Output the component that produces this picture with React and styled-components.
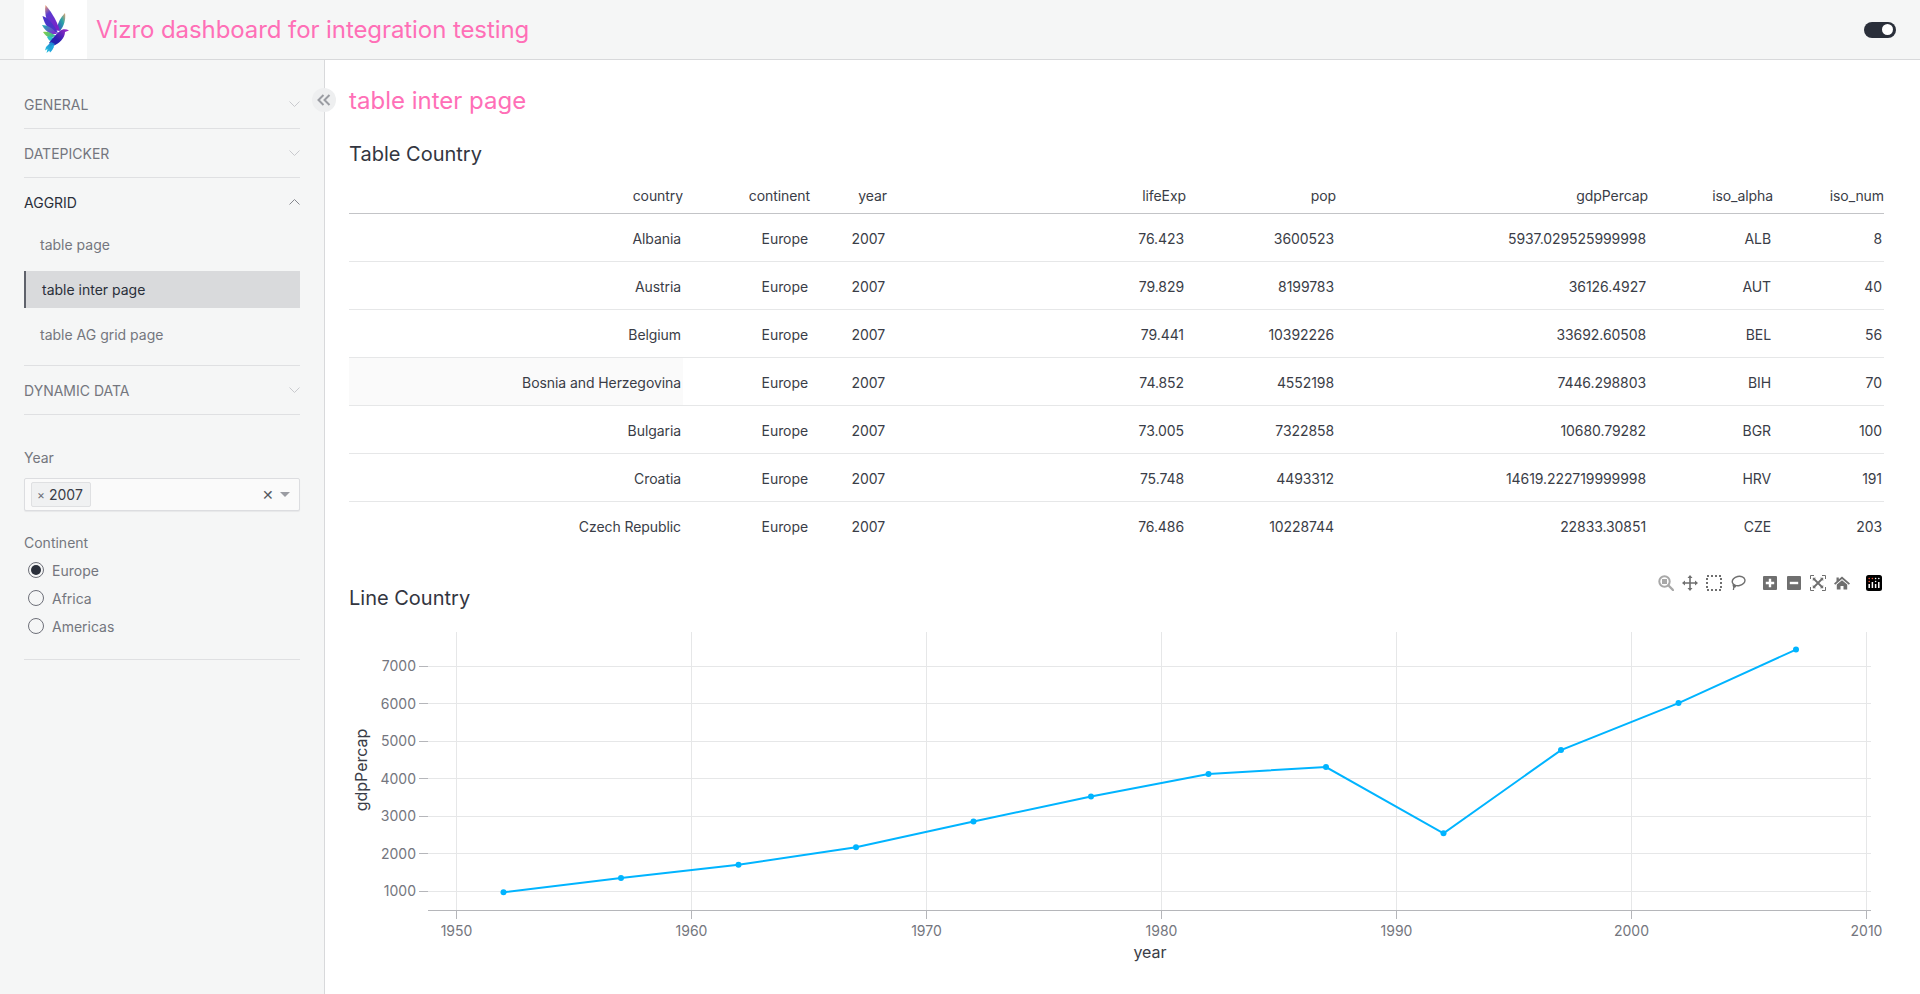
import React from 'react';
import styled, { createGlobalStyle } from 'styled-components';

const GlobalStyle = createGlobalStyle`
  html, body {
    margin: 0;
    padding: 0;
    height: 100%;
    overflow: hidden;
    background: #ffffff;
    font-family: Inter, "Liberation Sans", sans-serif;
    font-weight: 400;
    color: #3a3d47;
  }
  * { box-sizing: border-box; }
`;

const Page = styled.div`
  display: flex;
  flex-direction: column;
  width: 100vw;
  height: 100vh;
`;

const Header = styled.header`
  display: flex;
  align-items: center;
  flex: 0 0 60px;
  height: 60px;
  padding: 0 24px;
  background: #f5f6f6;
  border-bottom: 1px solid #d8d9db;
`;

const LogoBox = styled.div`
  display: flex;
  width: 63px;
  height: 59px;
  background: #ffffff;
`;

const AppTitle = styled.div`
  margin-left: 9px;
  font-size: 24px;
  line-height: 32px;
  letter-spacing: -0.08px;
  color: #ff6fb7;
`;

const ThemeToggle = styled.div`
  display: flex;
  align-items: center;
  justify-content: flex-end;
  width: 32px;
  height: 16px;
  margin-left: auto;
  padding-right: 3px;
  border-radius: 8px;
  background: #2a2f3a;

  &::after {
    content: '';
    width: 11px;
    height: 11px;
    border-radius: 50%;
    background: #ffffff;
  }
`;

const Body = styled.div`
  display: flex;
  flex: 1;
  min-height: 0;
`;

const Sidebar = styled.aside`
  position: relative;
  flex: 0 0 325px;
  padding: 20px 24px 0;
  background: #f5f6f6;
  border-right: 1px solid #d8d9db;
`;

const CollapseButton = styled.div`
  position: absolute;
  top: 28px;
  right: -12px;
  display: flex;
  align-items: center;
  justify-content: center;
  width: 24px;
  height: 24px;
  border-radius: 50%;
  background: #eeeff0;
`;

const AccordionItem = styled.div`
  border-bottom: 1px solid #dfe0e2;
`;

const AccordionHead = styled.div`
  display: flex;
  align-items: center;
  justify-content: space-between;
  height: 48px;
  font-size: 14px;
  color: ${(p) => (p.$open ? '#2a2f3a' : '#74767e')};
`;

const SubList = styled.div`
  display: flex;
  flex-direction: column;
  gap: 8px;
  padding-bottom: 12px;
`;

const SubLink = styled.div`
  display: flex;
  align-items: center;
  height: 37px;
  font-size: 14px;
  padding-left: 16px;
  color: ${(p) => (p.$active ? '#2a2f3a' : '#74767e')};
  background: ${(p) => (p.$active ? '#d9dadc' : 'transparent')};
  border-left: 2px ${(p) => (p.$active ? 'solid #5f626b' : 'none')};
`;

const Controls = styled.div`
  padding: 33px 0 19px;
  border-bottom: 1px solid #dfe0e2;
`;

const ControlLabel = styled.div`
  font-size: 14px;
  line-height: 20px;
  color: #74767e;
`;

const Dropdown = styled.div`
  display: flex;
  align-items: center;
  height: 33px;
  margin: 10px 0 22px;
  padding: 0 9px 0 6px;
  background: #fafafa;
  border: 1px solid #dcdde0;
  border-radius: 2px;
  box-shadow: 0 1px 1px rgba(20, 23, 33, 0.06);
`;

const Chip = styled.div`
  display: flex;
  align-items: center;
  height: 25px;
  width: 60px;
  padding-left: 5px;
  gap: 4px;
  font-size: 14px;
  background: #f0f1f2;
  border: 1px solid #dfe0e2;
  border-radius: 2px;
`;

const ChipClose = styled.span`
  font-size: 12px;
  color: #6e7079;
`;

const ClearIcon = styled.span`
  margin-left: auto;
  font-size: 14px;
  line-height: 1;
  color: #55585f;
`;

const Caret = styled.span`
  margin-left: 6px;
  width: 0;
  height: 0;
  border-left: 5px solid transparent;
  border-right: 5px solid transparent;
  border-top: 5px solid #9a9ca2;
`;

const RadioGroup = styled.div`
  display: flex;
  flex-direction: column;
  margin-top: 3px;
`;

const RadioRow = styled.div`
  display: flex;
  align-items: center;
  gap: 8px;
  height: 28px;
  padding-left: 4px;
  font-size: 14px;
  color: #74767e;
`;

const RadioDot = styled.span`
  display: flex;
  align-items: center;
  justify-content: center;
  width: 16px;
  height: 16px;
  border: 1px solid #6e7079;
  border-radius: 50%;

  &::after {
    content: '';
    width: 10px;
    height: 10px;
    border-radius: 50%;
    background: ${(p) => (p.$checked ? '#2a2f3a' : 'transparent')};
  }
`;

const Main = styled.main`
  flex: 1;
  min-width: 0;
  padding: 0 36px 0 24px;
`;

const PageTitle = styled.h1`
  margin: 25px 0 0;
  font-size: 24px;
  line-height: 32px;
  font-weight: 400;
  color: #ff6fb7;
`;

const SectionTitle = styled.h2`
  margin: ${(p) => p.$margin};
  font-size: 20px;
  line-height: 28px;
  font-weight: 400;
  color: #33363f;
`;

const Table = styled.div`
  margin-top: 6px;
`;

const TableRow = styled.div`
  display: grid;
  grid-template-columns: 334px 127px 77px 299px 150px 312px 125px 111px;
  align-items: center;
  height: ${(p) => (p.$head ? '40px' : '48px')};
  border-bottom: 1px solid ${(p) => (p.$head ? '#c3c4c7' : p.$last ? 'transparent' : '#e6e7e8')};
`;

const HeadCell = styled.div`
  font-size: 14px;
  letter-spacing: -0.08px;
  text-align: right;
  padding-top: 4px;
`;

const Cell = styled.div`
  display: flex;
  align-items: center;
  justify-content: flex-end;
  height: 100%;
  padding: 2px 2px 0 0;
  font-size: 14px;
  letter-spacing: -0.08px;
  background: ${(p) => (p.$hover ? '#fafafa' : 'transparent')};
`;

const ChartBlock = styled.section`
  position: relative;
`;

const ModeBar = styled.div`
  position: absolute;
  top: -9px;
  right: 2px;
  display: flex;
  gap: 16px;
`;

const ModeGroup = styled.div`
  display: flex;
  gap: 8px;
`;

const ChartSvg = styled.svg`
  display: block;
  width: 1535px;
  height: 370px;
  font-family: Inter, "Liberation Sans", sans-serif;
`;

const Chevron = ({ open }) => (
  <svg width="11" height="6" viewBox="0 0 11 6">
    <polyline
      points={open ? '0.5,5.5 5.5,0.5 10.5,5.5' : '0.5,0.5 5.5,5.5 10.5,0.5'}
      fill="none"
      stroke={open ? '#85878e' : '#c9cace'}
      strokeWidth="1"
    />
  </svg>
);

const BirdLogo = () => (
  <svg width="63" height="59" viewBox="24 0 63 59">
    <defs>
      <linearGradient id="wingA" x1="0" y1="0" x2="0.5" y2="1">
        <stop offset="0" stopColor="#f4a66a" />
        <stop offset="0.35" stopColor="#5a3bd0" />
        <stop offset="1" stopColor="#7a22c8" />
      </linearGradient>
      <linearGradient id="wingB" x1="0" y1="0" x2="1" y2="0.6">
        <stop offset="0" stopColor="#1fb8b0" />
        <stop offset="1" stopColor="#7d2fd0" />
      </linearGradient>
      <linearGradient id="wingC" x1="0" y1="0" x2="1" y2="0.3">
        <stop offset="0" stopColor="#8bd13f" />
        <stop offset="1" stopColor="#2fb7a5" />
      </linearGradient>
      <linearGradient id="bodyG" x1="1" y1="0" x2="0" y2="1">
        <stop offset="0" stopColor="#a52bc9" />
        <stop offset="0.6" stopColor="#2a1fb0" />
        <stop offset="1" stopColor="#1c2aa8" />
      </linearGradient>
      <linearGradient id="tailG" x1="1" y1="0" x2="0" y2="1">
        <stop offset="0" stopColor="#1b6fd0" />
        <stop offset="1" stopColor="#29d0e0" />
      </linearGradient>
      <linearGradient id="wingR" x1="1" y1="0" x2="0" y2="1">
        <stop offset="0" stopColor="#e8a070" />
        <stop offset="0.4" stopColor="#2aa6a8" />
        <stop offset="1" stopColor="#3a38c8" />
      </linearGradient>
    </defs>
    <path d="M65 13 C66 19 64 26 60 31 L57 28 C58 22 61 17 65 13Z" fill="url(#wingR)" />
    <path d="M45.5 5 C49 9 56 18 60 31 L53 30 C47 24 44 14 45.5 5Z" fill="url(#wingA)" />
    <path d="M42.5 16 C47 17 54 24 58 33 L52 32 C47 28 44 22 42.5 16Z" fill="#4a35c8" />
    <path d="M42 25 C47 25 53 28 57 34 L51 34 C47 32 44 29 42 25Z" fill="url(#wingB)" />
    <path d="M43 32 C47 31 52 33 56 36 L50 38 C47 37 45 35 43 32Z" fill="url(#wingC)" />
    <path d="M47 37 C50 36 53 37 55 39 L50 41 C49 40 48 39 47 37Z" fill="#2fc0c8" />
    <path d="M69 30.5 L65 32 C65 38 59 44 53 46 L49 43 C52 39 56 34 60 31 C62 29 66 28.5 69 30.5Z" fill="url(#bodyG)" />
    <path d="M55 44 C53 47 49 51 46.5 53 L47.5 49 L45 50.5 L46 47 L51 42Z" fill="url(#tailG)" />
    <path d="M54 45 C54 48 52 51 50 52.5 L49 50 L52 45Z" fill="#21a6dc" />
  </svg>
);

const navAccordions = [
  { label: 'GENERAL' },
  { label: 'DATEPICKER' },
  { label: 'AGGRID', open: true },
  { label: 'DYNAMIC DATA' },
];

const subLinks = ['table page', 'table inter page', 'table AG grid page'];

const columns = ['country', 'continent', 'year', 'lifeExp', 'pop', 'gdpPercap', 'iso_alpha', 'iso_num'];

const rows = [
  ['Albania', 'Europe', '2007', '76.423', '3600523', '5937.029525999998', 'ALB', '8'],
  ['Austria', 'Europe', '2007', '79.829', '8199783', '36126.4927', 'AUT', '40'],
  ['Belgium', 'Europe', '2007', '79.441', '10392226', '33692.60508', 'BEL', '56'],
  ['Bosnia and Herzegovina', 'Europe', '2007', '74.852', '4552198', '7446.298803', 'BIH', '70'],
  ['Bulgaria', 'Europe', '2007', '73.005', '7322858', '10680.79282', 'BGR', '100'],
  ['Croatia', 'Europe', '2007', '75.748', '4493312', '14619.222719999998', 'HRV', '191'],
  ['Czech Republic', 'Europe', '2007', '76.486', '10228744', '22833.30851', 'CZE', '203'],
];

const series = [
  [1952, 974], [1957, 1354], [1962, 1710], [1967, 2172], [1972, 2860], [1977, 3528],
  [1982, 4127], [1987, 4314], [1992, 2547], [1997, 4766], [2002, 6019], [2007, 7446],
];

const xPos = (year) => 456.5 + (year - 1950) * 23.5;
const yPos = (val) => 890.3 - (val - 1000) * 0.0375;
// gridlines sit on whole pixels so they stay one pixel wide
const crisp = (v) => Math.floor(v) + 0.5;

const LineChart = () => {
  const xTicks = [1950, 1960, 1970, 1980, 1990, 2000, 2010];
  const yTicks = [1000, 2000, 3000, 4000, 5000, 6000, 7000];
  const points = series.map(([x, y]) => `${xPos(x)},${yPos(y)}`).join(' ');
  return (
    <ChartSvg viewBox="349 611 1535 370">
      {xTicks.map((t) => (
        <g key={t}>
          <line x1={crisp(xPos(t))} x2={crisp(xPos(t))} y1="631" y2="909" stroke="#e6e7e8" />
          <line x1={crisp(xPos(t))} x2={crisp(xPos(t))} y1="909" y2="918" stroke="#b5b6ba" />
          <text x={xPos(t)} y="935" fontSize="14" fill="#74767e" textAnchor="middle">{t}</text>
        </g>
      ))}
      {yTicks.map((t) => (
        <g key={t}>
          <line x1="428" x2="1871" y1={crisp(yPos(t))} y2={crisp(yPos(t))} stroke="#e6e7e8" />
          <line x1="419" x2="428" y1={crisp(yPos(t))} y2={crisp(yPos(t))} stroke="#b5b6ba" />
          <text x="416" y={yPos(t) + 5} fontSize="14" fill="#74767e" textAnchor="end">{t}</text>
        </g>
      ))}
      <line x1="428" x2="1871" y1="909.5" y2="909.5" stroke="#b5b6ba" />
      <polyline points={points} fill="none" stroke="#00b4ff" strokeWidth="2" />
      {series.map(([x, y]) => (
        <circle key={x} cx={xPos(x)} cy={yPos(y)} r="3" fill="#00b4ff" />
      ))}
      <text x="1150" y="957" fontSize="16" fill="#3a3d47" textAnchor="middle">year</text>
      <text
        x="0"
        y="0"
        fontSize="16"
        fill="#3a3d47"
        textAnchor="middle"
        transform="translate(367 769) rotate(-90)"
      >
        gdpPercap
      </text>
    </ChartSvg>
  );
};

const ModeIcon = ({ children }) => (
  <svg width="16" height="16" viewBox="0 0 16 16">{children}</svg>
);

const iconGray = '#6f6f6f';

const ModeBarIcons = () => (
  <ModeBar>
    <ModeGroup>
      <ModeIcon>
        <circle cx="6.5" cy="6.5" r="5.2" fill="none" stroke="#a8a8a8" strokeWidth="2" />
        <rect x="4" y="4" width="5" height="5" fill="#a8a8a8" />
        <line x1="10.5" y1="10.5" x2="15" y2="15" stroke="#a8a8a8" strokeWidth="2.4" strokeLinecap="round" />
      </ModeIcon>
      <ModeIcon>
        <path
          d="M8 0 L10.5 3 H8.8 V7.2 H13 V5.5 L16 8 L13 10.5 V8.8 H8.8 V13 H10.5 L8 16 L5.5 13 H7.2 V8.8 H3 V10.5 L0 8 L3 5.5 V7.2 H7.2 V3 H5.5Z"
          fill={iconGray}
        />
      </ModeIcon>
      <ModeIcon>
        <rect x="1" y="1" width="14" height="14" fill="none" stroke={iconGray} strokeWidth="2" strokeDasharray="2 2" />
      </ModeIcon>
      <ModeIcon>
        <ellipse cx="8.6" cy="6" rx="6.4" ry="4.6" fill="none" stroke={iconGray} strokeWidth="1.4" transform="rotate(-12 8.6 6)" />
        <path d="M3.6 9 C2.5 11 4 12.5 5 12 C6 11.4 5 10 4 10.6 L3.4 15" fill="none" stroke={iconGray} strokeWidth="1.3" />
      </ModeIcon>
    </ModeGroup>
    <ModeGroup>
      <ModeIcon>
        <rect x="1" y="1" width="14" height="14" rx="1" fill={iconGray} />
        <path d="M3.8 8 H12.2 M8 3.8 V12.2" stroke="#ffffff" strokeWidth="2.4" />
      </ModeIcon>
      <ModeIcon>
        <rect x="1" y="1" width="14" height="14" rx="1" fill={iconGray} />
        <path d="M3.8 8 H12.2" stroke="#ffffff" strokeWidth="2.4" />
      </ModeIcon>
      <ModeIcon>
        <path d="M0.5 4 V0.5 H4 M12 0.5 H15.5 V4 M15.5 12 V15.5 H12 M4 15.5 H0.5 V12" fill="none" stroke={iconGray} strokeWidth="1" />
        <path d="M4 4 L12 12 M12 4 L4 12" stroke={iconGray} strokeWidth="1.8" />
        <path d="M2.8 2.8 H6 L2.8 6Z M13.2 2.8 V6 L10 2.8Z M13.2 13.2 H10 L13.2 10Z M2.8 13.2 V10 L6 13.2Z" fill={iconGray} />
      </ModeIcon>
      <ModeIcon>
        <path d="M8 1.5 L16 8.5 L14.8 9.8 L8 4 L1.2 9.8 L0 8.5 L2.5 6.3 V2.5 H4.8 V4.3Z" fill={iconGray} />
        <path d="M2.8 9.6 L8 5.2 L13.2 9.6 V14.5 H9.5 V11 H6.5 V14.5 H2.8Z" fill={iconGray} />
      </ModeIcon>
    </ModeGroup>
    <ModeIcon>
      <rect x="0" y="0" width="16" height="16" rx="2.5" fill="#000000" />
      <path d="M3.2 9 V13 M6.4 7 V13 M9.6 9 V13 M12.8 7 V13" stroke="#ffffff" strokeWidth="1.5" />
      <circle cx="3.2" cy="3.5" r="0.8" fill="#ef553b" />
      <circle cx="6.4" cy="3.5" r="0.8" fill="#ef553b" />
      <circle cx="9.6" cy="3.5" r="0.8" fill="#ffffff" />
      <circle cx="12.8" cy="3.5" r="0.8" fill="#ffffff" />
      <circle cx="3.2" cy="6.5" r="0.8" fill="#ef553b" />
      <circle cx="9.6" cy="6.5" r="0.8" fill="#ffffff" />
    </ModeIcon>
  </ModeBar>
);

const App = () => {
  return (
    <Page>
      <GlobalStyle />
      <Header>
        <LogoBox>
          <BirdLogo />
        </LogoBox>
        <AppTitle>Vizro dashboard for integration testing</AppTitle>
        <ThemeToggle />
      </Header>
      <Body>
        <Sidebar>
          <CollapseButton>
            <svg width="14" height="12" viewBox="0 0 14 12">
              <path d="M6.5 1 L1.5 6 L6.5 11 M12.5 1 L7.5 6 L12.5 11" fill="none" stroke="#9a9ca2" strokeWidth="2" />
            </svg>
          </CollapseButton>
          {navAccordions.map((item) => (
            <AccordionItem key={item.label}>
              <AccordionHead $open={item.open}>
                {item.label}
                <Chevron open={item.open} />
              </AccordionHead>
              {item.open && (
                <SubList>
                  {subLinks.map((link) => (
                    <SubLink key={link} $active={link === 'table inter page'}>{link}</SubLink>
                  ))}
                </SubList>
              )}
            </AccordionItem>
          ))}
          <Controls>
            <ControlLabel>Year</ControlLabel>
            <Dropdown>
              <Chip>
                <ChipClose>×</ChipClose>
                2007
              </Chip>
              <ClearIcon>✕</ClearIcon>
              <Caret />
            </Dropdown>
            <ControlLabel>Continent</ControlLabel>
            <RadioGroup>
              <RadioRow><RadioDot $checked />Europe</RadioRow>
              <RadioRow><RadioDot />Africa</RadioRow>
              <RadioRow><RadioDot />Americas</RadioRow>
            </RadioGroup>
          </Controls>
        </Sidebar>
        <Main>
          <PageTitle>table inter page</PageTitle>
          <SectionTitle $margin="23px 0 0">Table Country</SectionTitle>
          <Table>
            <TableRow $head>
              {columns.map((c) => (
                <HeadCell key={c}>{c}</HeadCell>
              ))}
            </TableRow>
            {rows.map((row, i) => (
              <TableRow key={row[0]} $last={i === rows.length - 1}>
                {row.map((v, j) => (
                  <Cell key={columns[j]} $hover={i === 3 && j === 0}>{v}</Cell>
                ))}
              </TableRow>
            ))}
          </Table>
          <ChartBlock>
            <ModeBarIcons />
            <SectionTitle $margin="34px 0 0">Line Country</SectionTitle>
            <LineChart />
          </ChartBlock>
        </Main>
      </Body>
    </Page>
  );
};

export default App;
